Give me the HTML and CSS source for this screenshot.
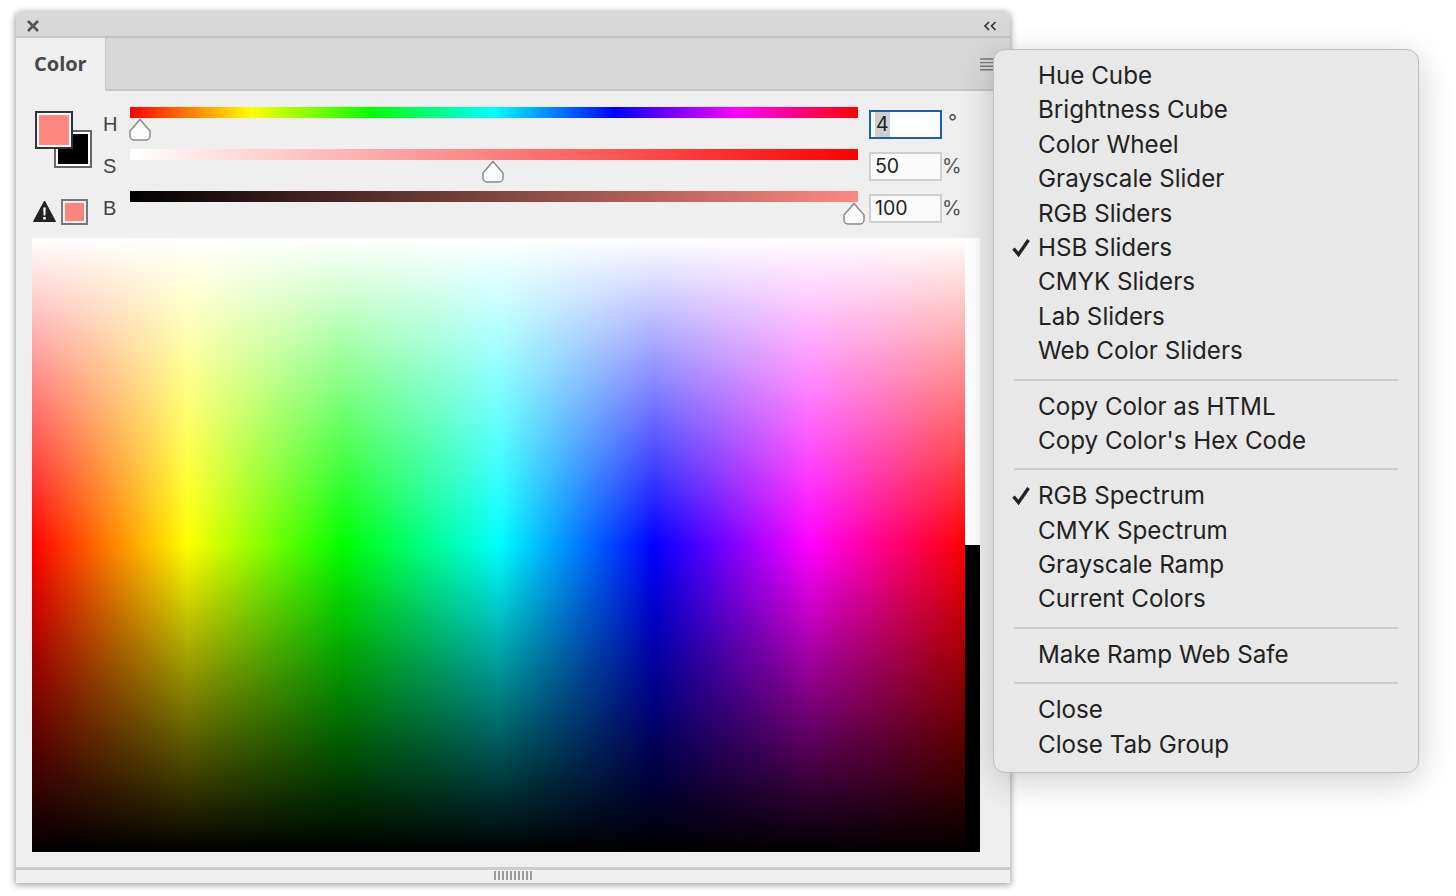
FILE: index.html
```html
<!DOCTYPE html>
<html lang="en">
<head>
<meta charset="utf-8">
<title>Color panel</title>
<link rel="stylesheet" href="styles.css">
</head>
<body>
<div class="panel">
  <header class="titlebar">
    <svg class="close-icon" width="12" height="12" viewBox="0 0 12 12"><path d="M1 1l10 10M11 1L1 11" stroke="#555" stroke-width="2.8" fill="none"/></svg>
    <svg class="collapse-icon" width="14" height="10" viewBox="0 0 14 10"><path d="M6 1L2 5l4 4M12.5 1l-4 4 4 4" stroke="#333" stroke-width="1.7" fill="none"/></svg>
  </header>
  <div class="tabstrip">
    <div class="tab">Color</div>
    <svg class="menu-icon" width="14" height="13" viewBox="0 0 14 13"><path d="M0 1h14M0 4.6h14M0 8.2h14M0 11.8h14" stroke="#777" stroke-width="1.4" fill="none"/></svg>
  </div>
  <div class="controls">
    <div class="swatches">
      <div class="swatch-stack">
        <div class="swatch back"></div>
        <div class="swatch fore"></div>
      </div>
      <div class="gamut">
        <svg width="23" height="22" viewBox="0 0 23 22"><path d="M11.5 1L22.5 21.5H.5z" fill="#222" stroke="#222" stroke-linejoin="round"/><path d="M10.2 7.5h2.6l-.4 8h-1.8zM10.2 17h2.6v2.6h-2.6z" fill="#fff"/></svg>
        <div class="swatch small"></div>
      </div>
    </div>
    <div class="sliders">
      <div class="row">
        <span class="label">H</span>
        <div class="track"><div class="bar hue"></div>
          <svg class="thumb thumb-h" width="24" height="24" viewBox="0 0 24 24"><path d="M12 1.5L22 13v5a4 4 0 0 1-4 4H6a4 4 0 0 1-4-4v-5z" fill="#f9fbfc" stroke="#8a8a8a" stroke-width="1.5"/></svg>
        </div>
        <div class="field focus"><span class="selected">4</span></div>
        <span class="unit degree">°</span>
      </div>
      <div class="row">
        <span class="label">S</span>
        <div class="track"><div class="bar sat"></div>
          <svg class="thumb thumb-s" width="24" height="24" viewBox="0 0 24 24"><path d="M12 1.5L22 13v5a4 4 0 0 1-4 4H6a4 4 0 0 1-4-4v-5z" fill="#f9fbfc" stroke="#8a8a8a" stroke-width="1.5"/></svg>
        </div>
        <div class="field">50</div>
        <span class="unit">%</span>
      </div>
      <div class="row">
        <span class="label">B</span>
        <div class="track"><div class="bar bri"></div>
          <svg class="thumb thumb-b" width="24" height="24" viewBox="0 0 24 24"><path d="M12 1.5L22 13v5a4 4 0 0 1-4 4H6a4 4 0 0 1-4-4v-5z" fill="#f9fbfc" stroke="#8a8a8a" stroke-width="1.5"/></svg>
        </div>
        <div class="field">100</div>
        <span class="unit">%</span>
      </div>
    </div>
  </div>
  <div class="ramp">
    <div class="spectrum"></div>
    <div class="endcaps"><div class="cap-white"></div><div class="cap-black"></div></div>
  </div>
  <footer class="footer">
    <div class="grip"></div>
  </footer>
</div>

<nav class="menu">
  <ul class="group">
    <li>Hue Cube</li>
    <li>Brightness Cube</li>
    <li>Color Wheel</li>
    <li>Grayscale Slider</li>
    <li>RGB Sliders</li>
    <li><svg class="check" width="19" height="21" viewBox="0 0 19 21"><path d="M1.5 10.5l5 6L16.5 2" stroke="#222" stroke-width="3.3" fill="none"/></svg>HSB Sliders</li>
    <li>CMYK Sliders</li>
    <li>Lab Sliders</li>
    <li>Web Color Sliders</li>
  </ul>
  <ul class="group">
    <li>Copy Color as HTML</li>
    <li>Copy Color's Hex Code</li>
  </ul>
  <ul class="group">
    <li><svg class="check" width="19" height="21" viewBox="0 0 19 21"><path d="M1.5 10.5l5 6L16.5 2" stroke="#222" stroke-width="3.3" fill="none"/></svg>RGB Spectrum</li>
    <li>CMYK Spectrum</li>
    <li>Grayscale Ramp</li>
    <li>Current Colors</li>
  </ul>
  <ul class="group">
    <li>Make Ramp Web Safe</li>
  </ul>
  <ul class="group">
    <li>Close</li>
    <li>Close Tab Group</li>
  </ul>
</nav>
</body>
</html>
```
FILE: styles.css
```css
* { box-sizing: border-box; }

html, body { margin: 0; height: 100%; }

body {
  position: relative;
  width: 1456px;
  height: 896px;
  overflow: hidden;
  background: #fff;
  font-family: Inter, "Liberation Sans", sans-serif;
}

.panel {
  width: 994px;
  height: 871px;
  margin: 12px 0 0 16px;
  display: flex;
  flex-direction: column;
  background: #efefef;
  border-radius: 6px 6px 0 0;
  box-shadow: 0 1px 6px 1px rgba(0, 0, 0, .38);
}

.titlebar {
  flex: 0 0 26px;
  display: flex;
  align-items: center;
  justify-content: space-between;
  padding: 3px 13px 0 11px;
  background: #d8d8d8;
  border-bottom: 2px solid #c4c4c4;
  border-radius: 6px 6px 0 0;
}

.tabstrip {
  flex: 0 0 53px;
  display: flex;
  justify-content: space-between;
  background: #d8d8d8;
  box-shadow: inset 0 -2px 0 #c6c6c6;
}

.tab {
  width: 90px;
  padding: 12px 0 0 18px;
  background: #efefef;
  border-right: 1px solid #c8c8c8;
  font-family: "Open Sans", sans-serif;
  font-size: 20px;
  font-weight: 700;
  line-height: 28px;
  color: #484848;
}

.menu-icon { margin: 20px 16px 0 0; }

.controls {
  flex: 0 0 147px;
  display: flex;
  padding: 16px 0 0 17px;
}

.swatches {
  flex: 0 0 62px;
  display: flex;
  flex-direction: column;
}

.swatch-stack {
  position: relative;
  height: 88px;
  margin-top: 4px;
}

.swatch {
  border: 3px solid #fff;
  outline-style: solid;
  outline-width: 2px;
  outline-offset: -1px;
}

.swatch.fore, .swatch.back {
  position: absolute;
  width: 36px;
  height: 36px;
}

.swatch.fore {
  left: 3px;
  top: 1px;
  background: #ff8880;
  outline-color: #333;
}

.swatch.back {
  left: 22px;
  top: 20px;
  background: #000;
  outline-color: #666;
}

.gamut {
  display: flex;
  align-items: flex-start;
  gap: 6px;
  padding-top: 1px;
}

.swatch.small {
  width: 25px;
  height: 24px;
  background: #f6867f;
  border-color: #efefef;
  outline-color: #777;
}

.sliders { flex: 1; display: flex; flex-direction: column; }

.row {
  display: grid;
  grid-template-columns: 23px 751px 73px auto;
  height: 42px;
}

.label {
  padding: 6px 0 0 8px;
  font-family: "Liberation Sans", sans-serif;
  font-size: 20px;
  line-height: 22px;
  color: #444;
}

.track { position: relative; margin-left: 12px; width: 728px; }

.bar { height: 11px; }

.hue { background: linear-gradient(90deg, #f00 0%, #ff0 16.667%, #0f0 33.333%, #0ff 50%, #00f 66.667%, #f0f 83.333%, #f00 100%); }
.sat { background: linear-gradient(90deg, #fff, #f00); }
.bri { background: linear-gradient(90deg, #000, #ff8880); }

.thumb { position: absolute; top: 11px; }
.thumb-h { left: -2px; }
.thumb-s { left: 351px; }
.thumb-b { left: 712px; }

.field {
  width: 73px;
  height: 29px;
  margin-top: 3px;
  padding-left: 4px;
  background: #fafafa;
  border: 2px solid #cfcfcf;
  font-size: 19.5px;
  line-height: 25px;
  color: #222;
}

.field.focus {
  border-color: #1a5fb4;
  background: #fbfdff;
}

.selected { display: inline-block; padding: 0 1px; background: #cfcfcf; line-height: 25px; }

.unit {
  padding: 5px 0 0 0;
  font-size: 20px;
  line-height: 24px;
  color: #555;
}

.unit.degree { padding: 3px 0 0 6px; }

.ramp {
  display: flex;
  flex: 0 0 614px;
  margin: 0 30px 0 16px;
}

.spectrum {
  flex: 1;
  background:
    linear-gradient(180deg, #fff 0%, rgba(255, 255, 255, 0) 50%, rgba(0, 0, 0, 0) 50%, #000 100%),
    linear-gradient(90deg, #f00 0%, #ff0 16.667%, #0f0 33.333%, #0ff 50%, #00f 66.667%, #f0f 83.333%, #f00 100%);
}

.endcaps { flex: 0 0 15px; display: flex; flex-direction: column; }
.cap-white { flex: 1; background: #fff; }
.cap-black { flex: 1; background: #000; }

.footer {
  flex: 1;
  display: flex;
  justify-content: center;
  margin-top: 15px;
  background: #f0f0f0;
  border-top: 3px solid #cbcbcb;
}

.grip {
  width: 38px;
  height: 9px;
  margin-top: 1px;
  background: repeating-linear-gradient(90deg, #9d9d9d 0 2px, transparent 2px 4px);
}

.menu {
  position: absolute;
  left: 993px;
  top: 49px;
  width: 426px;
  height: 724px;
  padding: 9px 20px 0 20px;
  background: #e8e8e8;
  border: 1px solid #bdbdbd;
  border-radius: 12px;
  box-shadow: 0 8px 36px rgba(0, 0, 0, .2);
}

.group {
  list-style: none;
  margin: 0;
  padding: 0;
}

.group + .group {
  margin-top: 10px;
  padding-top: 9px;
  border-top: 2px solid #cdcdcd;
}

.group li {
  position: relative;
  height: 34.4px;
  padding-left: 24px;
  font-size: 24.2px;
  line-height: 34.4px;
  color: #222;
  white-space: nowrap;
}

.check { position: absolute; left: -2px; top: 7px; }
```
